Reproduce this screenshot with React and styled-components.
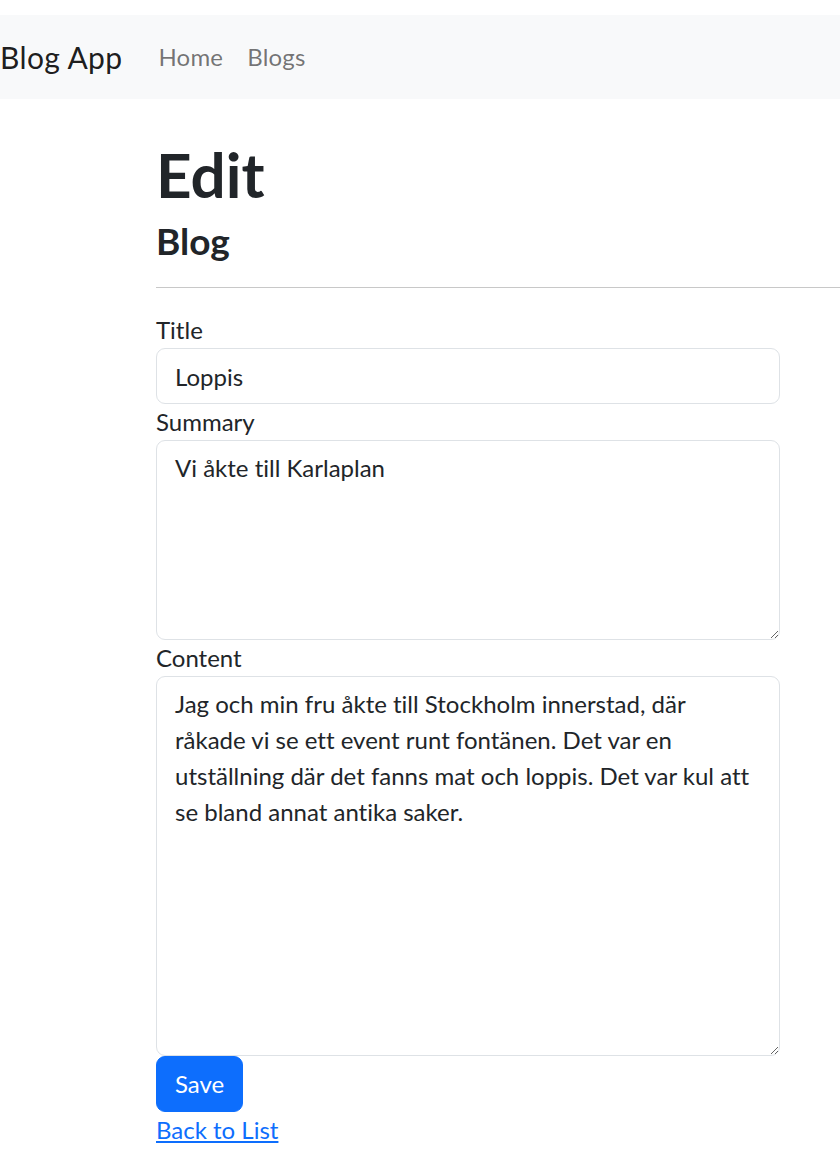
import React, { useState } from 'react'
import styled, { createGlobalStyle } from 'styled-components'

const GlobalStyle = createGlobalStyle`
  * { box-sizing: border-box; }
  body {
    margin: 0;
    background: #fff;
    color: #212529;
    font-family: Lato, "Open Sans", sans-serif;
    font-size: 24px;
    line-height: 1.5;
    font-variant-ligatures: none;
  }
`

const Page = styled.div`
  padding-top: 15px;
`

const Navbar = styled.nav`
  display: flex;
  align-items: center;
  background-color: #f8f9fa;
  padding: 12px 0;
  margin-bottom: 24px;
`

const Brand = styled.a`
  font-size: 30px;
  line-height: 45px;
  padding: 7.5px 0;
  margin-right: 24px;
  letter-spacing: 0.4px;
  color: rgba(0, 0, 0, 0.9);
  text-decoration: none;
`

const NavLink = styled.a`
  padding: 12px;
  line-height: 36px;
  letter-spacing: 0.2px;
  color: rgba(0, 0, 0, 0.55);
  text-decoration: none;
`

const Main = styled.main`
  padding: 7px 0 24px 156px;
`

const Heading = styled.h1`
  margin: 0;
  font-size: 62px;
  font-weight: 700;
  line-height: 89px;
`

const SubHeading = styled.h4`
  margin: 0 0 12px;
  font-size: 37px;
  font-weight: 700;
  line-height: 1.2;
`

const Rule = styled.hr`
  margin: 24px 0;
  border: 0;
  border-top: 1px solid #c8c8c8;
`

const Form = styled.form`
  display: flex;
  flex-direction: column;
  width: 624px;
`

const Label = styled.label`
  display: block;
`

const field = `
  display: block;
  width: 100%;
  padding: 9px 18px;
  font: inherit;
  color: #212529;
  background: #fff;
  border: 1px solid #dee2e6;
  border-radius: 9px;
  outline: none;
`

const Input = styled.input`
  ${field}
  height: 56px;
`

const TextArea = styled.textarea`
  ${field}
  height: ${(p) => p.$h}px;
  resize: vertical;
`

const SaveButton = styled.button`
  align-self: flex-start;
  padding: 9px 18px;
  font: inherit;
  line-height: 36px;
  color: #fff;
  background-color: #0d6efd;
  border: 1px solid #0d6efd;
  border-radius: 9px;
  cursor: pointer;
`

const BackLink = styled.a`
  align-self: flex-start;
  color: #0d6efd;
  text-decoration: underline;
`

export default function App() {
  const [form, setForm] = useState({
    title: 'Loppis',
    summary: 'Vi åkte till Karlaplan',
    content:
      'Jag och min fru åkte till Stockholm innerstad, där råkade vi se ett event runt fontänen. Det var en utställning där det fanns mat och loppis. Det var kul att se bland annat antika saker.',
  })
  const change = (e) => setForm({ ...form, [e.target.name]: e.target.value })

  return (
    <Page>
      <GlobalStyle />
      <Navbar>
        <Brand href="#">Blog App</Brand>
        <NavLink href="#">Home</NavLink>
        <NavLink href="#">Blogs</NavLink>
      </Navbar>
      <Main>
        <Heading>Edit</Heading>
        <SubHeading>Blog</SubHeading>
        <Rule />
        <Form onSubmit={(e) => e.preventDefault()}>
          <Label htmlFor="title">Title</Label>
          <Input id="title" name="title" value={form.title} onChange={change} />
          <Label htmlFor="summary">Summary</Label>
          <TextArea id="summary" name="summary" $h={200} value={form.summary} onChange={change} />
          <Label htmlFor="content">Content</Label>
          <TextArea id="content" name="content" $h={380} value={form.content} onChange={change} />
          <SaveButton type="submit">Save</SaveButton>
          <BackLink href="#">Back to List</BackLink>
        </Form>
      </Main>
    </Page>
  )
}
